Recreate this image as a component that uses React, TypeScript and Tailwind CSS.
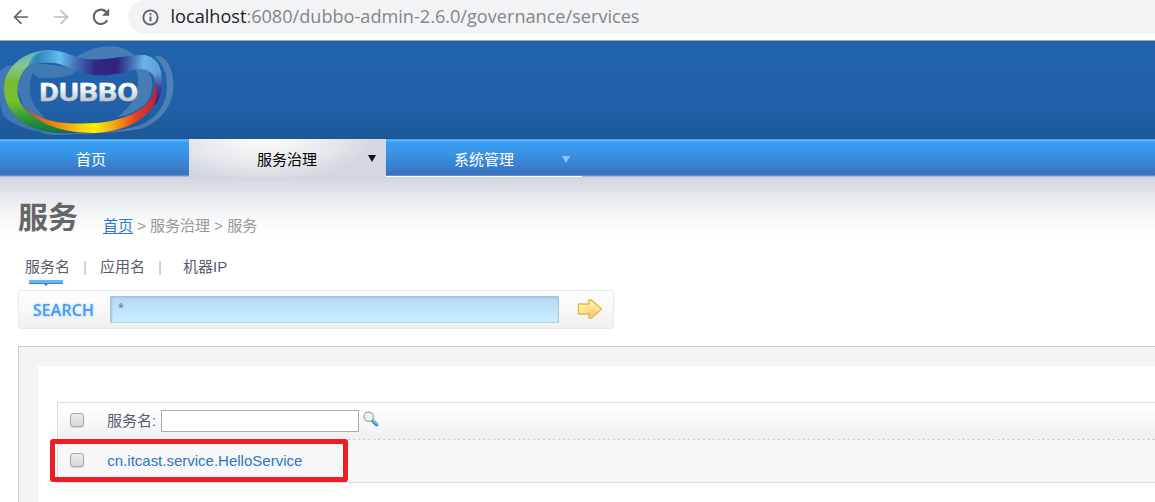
import { ArrowLeft, ArrowRight } from "lucide-react";

const cjk = "font-['Liberation_Sans','Noto_Sans_CJK_SC',sans-serif]";

function BrowserBar() {
  return (
    <div className="flex h-10 items-start bg-white">
      <div className="flex h-[33px] w-32 shrink-0 items-center pl-[10px]">
        <ArrowLeft size={22} strokeWidth={1.9} className="text-[#5f6368]" />
        <ArrowRight size={22} strokeWidth={1.9} className="ml-[18px] text-[#bdbfc1]" />
        <svg viewBox="0 0 20 20" className="ml-[19px] size-5" fill="none">
          <path d="M16.3 13.2A7.2 7.2 0 1 1 15.6 5.3" stroke="#5f6368" strokeWidth="2.1" />
          <path d="M18.2 1.6v7.2H11z" fill="#5f6368" />
        </svg>
      </div>
      <div className="flex h-[34px] flex-1 items-center rounded-l-[17px] bg-[#f1f3f4] pl-[14px]">
        <svg viewBox="0 0 18 18" className="size-[17px] shrink-0" fill="none">
          <circle cx="9" cy="9" r="7.6" stroke="#5f6368" strokeWidth="2" />
          <path d="M9 8v5M9 4.6v2" stroke="#5f6368" strokeWidth="2" />
        </svg>
        <svg className="ml-[11px] h-[34px] w-[560px] overflow-visible">
          <text
            x="0.5"
            y="23"
            textLength="469"
            lengthAdjust="spacingAndGlyphs"
            className="font-['Open_Sans','Noto_Sans',sans-serif] text-[19px]"
            fill="#80868b"
          >
            <tspan fill="#202124">localhost</tspan>:6080/dubbo-admin-2.6.0/governance/services
          </text>
        </svg>
      </div>
    </div>
  );
}

function Logo() {
  return (
    <svg viewBox="0 15 570 294" className="h-[98px] w-[190px]">
      <defs>
        <linearGradient id="top" gradientUnits="userSpaceOnUse" x1="80" y1="60" x2="480" y2="90">
          <stop offset="0" stopColor="#4fa3b8" />
          <stop offset=".08" stopColor="#2f86c0" />
          <stop offset=".25" stopColor="#66bcec" />
          <stop offset=".36" stopColor="#4476bf" />
          <stop offset=".52" stopColor="#312782" />
          <stop offset=".68" stopColor="#30247c" />
          <stop offset=".79" stopColor="#466fb8" />
          <stop offset=".88" stopColor="#6bb6e6" />
          <stop offset="1" stopColor="#5b9dd6" />
        </linearGradient>
        <linearGradient id="left" x1="0" y1="0" x2="0" y2="1">
          <stop offset="0" stopColor="#5fb0c0" />
          <stop offset=".2" stopColor="#83c78e" />
          <stop offset=".38" stopColor="#77bd35" />
          <stop offset=".62" stopColor="#78c02f" />
          <stop offset=".85" stopColor="#2d933a" />
          <stop offset="1" stopColor="#10783d" />
        </linearGradient>
        <linearGradient id="bottom" gradientUnits="userSpaceOnUse" x1="60" y1="0" x2="475" y2="0">
          <stop offset="0" stopColor="#c93f20" />
          <stop offset=".14" stopColor="#d9661e" />
          <stop offset=".3" stopColor="#f0930f" />
          <stop offset=".44" stopColor="#fbd20b" />
          <stop offset=".54" stopColor="#ffed00" />
          <stop offset=".68" stopColor="#f5a713" />
          <stop offset=".84" stopColor="#e0401f" />
          <stop offset="1" stopColor="#b82035" />
        </linearGradient>
        <linearGradient id="right" x1="0" y1="0" x2="0" y2="1">
          <stop offset="0" stopColor="#6bb6e6" />
          <stop offset=".35" stopColor="#5c9bd5" />
          <stop offset=".65" stopColor="#3a3f98" />
          <stop offset="1" stopColor="#33206f" />
        </linearGradient>
        <linearGradient id="word" gradientUnits="userSpaceOnUse" x1="0" y1="140" x2="0" y2="198">
          <stop offset="0.2" stopColor="#ffffff" />
          <stop offset="1" stopColor="#bcbec1" />
        </linearGradient>
      </defs>
      <path
        d="M0 105C20 82 60 88 110 82L230 95C235 118 190 126 130 126C112 126 105 118 98 112C82 150 85 196 125 235C150 255 110 262 80 235L54 165L12 165C14 210 60 270 160 290C90 290 30 262 12 240C-3 215 -8 130 0 105Z"
        fill="#8aaccb"
        fillOpacity=".32"
      />
      <path
        d="M225 66C265 35 350 10 400 55C440 95 465 120 455 160C452 190 435 210 410 222C395 232 375 240 350 244C410 200 425 150 408 100C350 75 290 70 225 66Z"
        fill="#8aaccb"
        fillOpacity=".36"
      />
      <path
        d="M462 62C495 50 520 95 520 145C522 200 490 252 430 276C350 294 250 292 170 297C150 297 130 294 120 288C250 297 350 290 420 268C485 240 505 185 500 140C500 100 480 75 462 62Z"
        fill="#8aaccb"
        fillOpacity=".42"
      />
      <path
        d="M158 42C75 40 12 92 12 158C12 231 82 290 175 288L205 288C130 266 68 235 54 180C45 128 78 80 120 68Z"
        fill="url(#left)"
      />
      <path
        d="M65 196C80 228 130 254 185 260C230 264 290 264 330 256C410 239 466 205 466 133C476 160 478 190 462 207C430 260 360 288 280 291C200 291 105 272 65 196Z"
        fill="url(#bottom)"
      />
      <path
        d="M402 100C440 94 464 112 466 140C474 160 472 185 462 210C480 194 486 165 486 132C486 84 460 57 424 57C415 65 405 80 402 100Z"
        fill="url(#right)"
      />
      <path
        d="M85 86C92 62 120 42 150 42C196 45 220 64 260 69C320 76 370 57 425 57C448 58 465 68 476 86C476 106 470 116 464 122C456 104 444 100 430 98C420 97 412 98 400 101C365 112 313 124 262 114C218 104 190 80 150 80C120 80 98 81 85 86Z"
        fill="url(#top)"
      />
      <text
        x="118"
        y="196"
        textLength="296"
        lengthAdjust="spacingAndGlyphs"
        className="font-['Roboto',sans-serif] text-[77px] font-bold"
        fill="url(#word)"
        stroke="url(#word)"
        strokeWidth="1.5"
        strokeLinejoin="round"
      >
        DUBBO
      </text>
    </svg>
  );
}

function Nav() {
  return (
    <nav className="flex h-[38px] bg-[linear-gradient(#3893e8_0px,#5db3fa_1px,#5db3fa_2px,#389df3_3px,#3997ea_12px,#3a71bd_36px,#8fa9d2_37px,#b8c7df_38px)] text-[15px] text-white">
      <div className="flex w-[189px] items-center pl-[76px] pt-1">首页</div>
      <div className="flex w-[197px] items-center bg-[radial-gradient(ellipse_110px_42px_at_75px_0px,#fcfcfc,#e9ebee_55%,#d3d8e0)] pl-[68px] pt-1 text-black">
        <span className="w-[111px]">服务治理</span>
        <svg viewBox="0 0 8 7" className="-mt-[3px] h-[7px] w-2"><path d="M0 0h8L4 7z" fill="#111" /></svg>
      </div>
      <div className="flex w-[196px] items-center border-b border-white pl-[68px] pt-[6px]">
        <span className="w-[108px]">系统管理</span>
        <svg viewBox="0 0 8 7" className="-mt-[3px] h-[7px] w-2"><path d="M0 0h8L4 7z" fill="#8bc8fa" /></svg>
      </div>
    </nav>
  );
}

function Check() {
  return <span className="-mt-[3px] block size-[14px] shrink-0 rounded-[3px] border border-[#a9a9a9] bg-linear-to-b from-[#ececec] to-[#d8d8d8] shadow-[0_1px_1px_#d5d5d5]" />;
}

function SearchBox() {
  return (
    <div className="flex h-[39px] w-[596px] items-center rounded-[2px] border border-[#e6e9ec] bg-linear-to-b from-white to-[#f0f0f0] pl-[14px]">
      <svg className="h-6 w-[77px] shrink-0 overflow-visible">
        <text x="0" y="17.5" textLength="61" lengthAdjust="spacingAndGlyphs" className="font-['Open_Sans','Noto_Sans',sans-serif] text-[16.5px] font-semibold drop-shadow-[0_0_1px_#8fc7fb]" fill="#459cf0">SEARCH</text>
      </svg>
      <div className="h-[27px] w-[449px] border border-[#a4c4dc] border-b-[#b3d9e4] bg-linear-to-b from-[#b4d7f5] to-[#cbefff] pl-[7px] text-[15px] leading-[22px] text-[#777] shadow-[inset_1px_1px_2px_#9fc4e6]">*</div>
      <svg viewBox="0 0 26 22" className="-mt-px ml-[18px] h-[22px] w-[26px]">
        <defs>
          <radialGradient id="gold" cx=".55" cy=".78" r=".7">
            <stop offset="0" stopColor="#ffc58c" />
            <stop offset=".5" stopColor="#ffe08d" />
            <stop offset="1" stopColor="#fff6a8" />
          </radialGradient>
        </defs>
        <path d="M1.5 6H12V2h2.5L24.5 11l-10 9H12V16H1.5z" fill="url(#gold)" stroke="#e4b93f" strokeWidth="1.4" strokeLinejoin="round" />
      </svg>
    </div>
  );
}

function ServiceTable() {
  return (
    <div className="ml-[18px] mt-[17px] h-[156px] border-l border-t border-[#c8cccb] bg-[#f1f4f3] pl-[19px] pt-[19px]">
      <div className="h-full bg-white pl-[19px] pt-9">
        <div className="relative h-[81px] border-y border-l border-[#dcdcdc]">
          <div className="flex h-[37px] items-center border-b border-dashed border-[#d2d2d2] bg-[linear-gradient(#fff_10%,#f9fafc_40%,#f0f0f2)] pl-3">
            <Check />
            <span className="ml-[23px] w-[54px] whitespace-nowrap text-[15px] text-[#565d70]">服务名:</span>
            <span className="h-[22px] w-[198px] border border-[#ababab] bg-white" />
            <svg viewBox="0 0 16 16" className="-mt-1 ml-1 size-4">
              <path d="m9.5 9.5 4 4" stroke="#3181c5" strokeWidth="3.6" strokeLinecap="round" />
              <path d="m10.4 9.5 3.4 3.4" stroke="#72c5f5" strokeWidth="2" strokeLinecap="round" />
              <circle cx="5.7" cy="5.7" r="4.7" fill="#e8f2f1" stroke="#a5adad" strokeWidth="1.3" />
            </svg>
          </div>
          <div className="flex h-[42px] items-center bg-[#f7f7f7] pl-3">
            <Check />
            <svg className="ml-[23px] h-6 w-[200px]">
              <text x="0.3" y="17" textLength="195" className="font-['Liberation_Sans',sans-serif] text-[15px]" fill="#2b75c9">cn.itcast.service.HelloService</text>
            </svg>
          </div>
          <div className="absolute left-[-8px] top-[36px] h-[42.5px] w-[297.5px] rounded-[3px] border-[5px] border-[#ee1c24]" />
        </div>
      </div>
    </div>
  );
}

export default function App() {
  return (
    <div className={`h-[502px] w-[1155px] overflow-hidden bg-white ${cjk}`}>
      <BrowserBar />
      <header className="h-[99px] border-t border-[#a5a5a5] bg-[linear-gradient(#2163ac,#2061a9_65%,#1c5898)]">
        <Logo />
      </header>
      <Nav />
      <main className="bg-[linear-gradient(#d1d6de_0px,#e3e6eb_17px,#f6f7f8_40px,#fff_60px)]">
        <div className="flex h-[73px] items-start pl-[18px]">
          <h1 className="mt-[18px] w-[85px] text-[30px] font-bold leading-[45px] text-[#666]">服务</h1>
          <div className="mt-[38px] flex whitespace-pre text-[15px] leading-[22px] text-[#999]">
            <span className="text-[#2b78d0] underline underline-offset-2">首页</span>
            <span> &gt; 服务治理 &gt; 服务</span>
          </div>
        </div>
        <div className="flex h-[40px] pl-[25px] pt-[6px] text-[15px] leading-[22px] text-[#565d70]">
          <div className="w-[58px]">
            服务名
            <svg viewBox="0 0 34 6" className="ml-[4px] mt-[2px] h-[6px] w-[34px]">
              <path d="M0 0h34v3H0z" fill="#67b7f8" />
              <path d="M0 3h34v1H0z" fill="#3e83c6" />
              <path d="M15 4h4l-2 2z" fill="#3478b7" />
            </svg>
          </div>
          <span className="w-[17px] text-[15px] text-[#bdbdc5]">|</span>
          <span className="w-[58px]">应用名</span>
          <span className="w-[25px] text-[15px] text-[#bdbdc5]">|</span>
          <span>机器IP</span>
        </div>
        <div className="pl-[18px]"><SearchBox /></div>
        <ServiceTable />
      </main>
    </div>
  );
}
